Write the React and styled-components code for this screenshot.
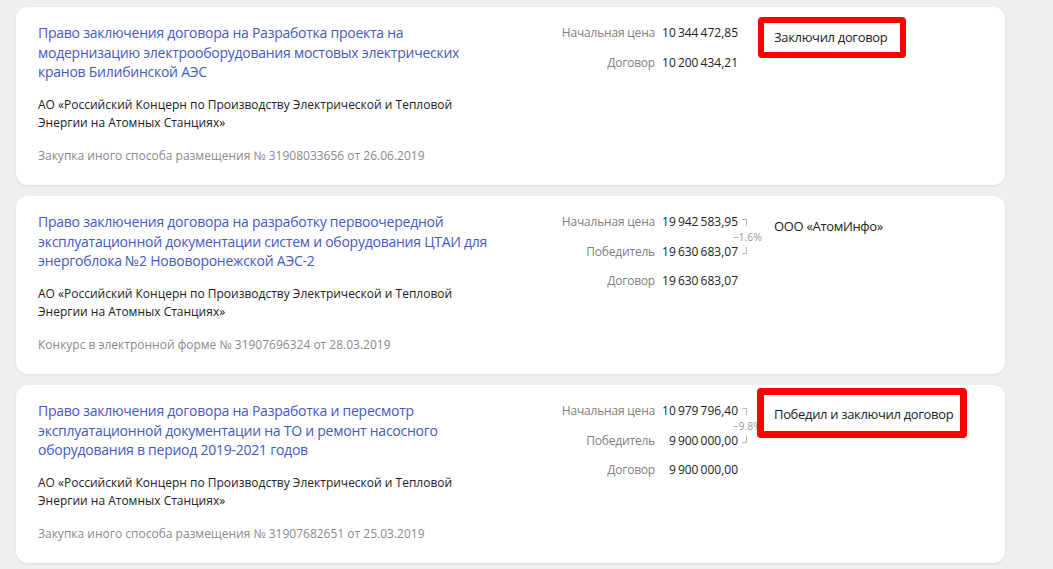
import React from 'react'
import styled, { createGlobalStyle } from 'styled-components'

const GlobalStyle = createGlobalStyle`
    body {
        margin: 0;
        background: #efefef;
        font-family: "Open Sans", "Liberation Sans", sans-serif;
    }
`

const purchases = [
    {
        title: 'Право заключения договора на Разработка проекта на модернизацию электрооборудования мостовых электрических кранов Билибинской АЭС',
        org: 'АО «Российский Концерн по Производству Электрической и Тепловой Энергии на Атомных Станциях»',
        meta: 'Закупка иного способа размещения № 31908033656 от 26.06.2019',
        prices: [
            { label: 'Начальная цена', value: '10 344 472,85' },
            { label: 'Договор', value: '10 200 434,21' },
        ],
        status: 'Заключил договор',
        mark: 'thin',
    },
    {
        title: 'Право заключения договора на разработку первоочередной эксплуатационной документации систем и оборудования ЦТАИ для энергоблока №2 Нововоронежской АЭС-2',
        org: 'АО «Российский Концерн по Производству Электрической и Тепловой Энергии на Атомных Станциях»',
        meta: 'Конкурс в электронной форме № 31907696324 от 28.03.2019',
        prices: [
            { label: 'Начальная цена', value: '19 942 583,95' },
            { label: 'Победитель', value: '19 630 683,07' },
            { label: 'Договор', value: '19 630 683,07' },
        ],
        drop: '−1.6%',
        status: 'ООО «АтомИнфо»',
    },
    {
        title: 'Право заключения договора на Разработка и пересмотр эксплуатационной документации на ТО и ремонт насосного оборудования в период 2019-2021 годов',
        org: 'АО «Российский Концерн по Производству Электрической и Тепловой Энергии на Атомных Станциях»',
        meta: 'Закупка иного способа размещения № 31907682651 от 25.03.2019',
        prices: [
            { label: 'Начальная цена', value: '10 979 796,40' },
            { label: 'Победитель', value: '9 900 000,00' },
            { label: 'Договор', value: '9 900 000,00' },
        ],
        drop: '−9.8%',
        status: 'Победил и заключил договор',
        mark: 'thick',
    },
]

// red annotation frames round the status
const frames = {
    none: { border: '6px solid transparent', pad: '5px 13px 5px 10px', shift: '-6px 0 0 0' },
    thin: { border: '6px solid #ff0000', pad: '5px 13px 6px 10px', shift: '-6px 0 0 0' },
    thick: { border: '7px solid #ff0000', pad: '10px 7px 8px 10px', shift: '-13px 0 0 -1px' },
}

function App() {
    return (
        <List>
            <GlobalStyle />
            {purchases.map((p, i) => (
                <Card key={i}>
                    <Info>
                        <Title href="#">{p.title}</Title>
                        <Org>{p.org}</Org>
                        <Meta>{p.meta}</Meta>
                    </Info>

                    <Prices>
                        {p.prices.map((row, j) => (
                            <React.Fragment key={j}>
                                <Label $row={j + 1}>{row.label}</Label>
                                <Value $row={j + 1}>{row.value}</Value>
                            </React.Fragment>
                        ))}
                        {p.drop && (
                            <>
                                <Corner $top />
                                <Corner />
                                <Drop>{p.drop}</Drop>
                            </>
                        )}
                    </Prices>

                    <Status $frame={frames[p.mark || 'none']}>{p.status}</Status>
                </Card>
            ))}
        </List>
    )
}
export default App;

const List = styled.div`
    display: flex;
    flex-direction: column;
    gap: 11px;
    padding: 7px 48px 8px 16px;
`
const Card = styled.div`
    display: flex;
    align-items: flex-start;
    background: #fff;
    border-radius: 12px;
    box-shadow: 0 1px 3px rgba(0, 0, 0, 0.07);
    padding: 16px 22px 20px 22px;
`
const Info = styled.div`
    flex: 0 0 460px;
    display: flex;
    flex-direction: column;
`
const Title = styled.a`
    color: #4459c2;
    font-size: 14px;
    line-height: 19.5px;
    letter-spacing: -0.25px;
    text-decoration: none;
`
const Org = styled.div`
    margin-top: 14.5px;
    color: #222;
    font-size: 12px;
    line-height: 18px;
`
const Meta = styled.div`
    margin-top: 15px;
    color: #8a8a8a;
    font-size: 12px;
    line-height: 18px;
`
const Prices = styled.div`
    flex: 0 0 260px;
    display: grid;
    grid-template-columns: 1fr 83px 20px;
    grid-auto-rows: 20px;
    row-gap: 9.5px;
    font-size: 12px;
    line-height: 20px;
`
const Label = styled.div`
    grid-column: 1;
    grid-row: ${p => p.$row};
    text-align: right;
    color: #808080;
    letter-spacing: -0.2px;
`
const Value = styled.div`
    grid-column: 2;
    grid-row: ${p => p.$row};
    text-align: right;
    color: #222;
    word-spacing: -1px;
    white-space: nowrap;
`
const Corner = styled.span`
    grid-column: 3;
    grid-row: ${p => (p.$top ? 1 : 2)};
    align-self: center;
    margin-left: 4px;
    width: 4px;
    height: 6px;
    border-right: 1px solid #bbb;
    border-${p => (p.$top ? 'top' : 'bottom')}: 1px solid #bbb;
    margin-top: ${p => (p.$top ? '0' : '-2px')};
`
const Drop = styled.div`
    grid-column: 3;
    grid-row: 1 / span 2;
    display: flex;
    align-items: center;
    justify-content: flex-end;
    margin-right: -4px;
    color: #999;
    font-size: 10.5px;
    white-space: nowrap;
`
const Status = styled.div`
    position: relative;
    margin: ${p => p.$frame.shift};
    padding: ${p => p.$frame.pad};
    border: ${p => p.$frame.border};
    border-radius: 4px;
    color: #222;
    font-size: 13px;
    line-height: 18px;
    letter-spacing: -0.33px;
    white-space: nowrap;
`
